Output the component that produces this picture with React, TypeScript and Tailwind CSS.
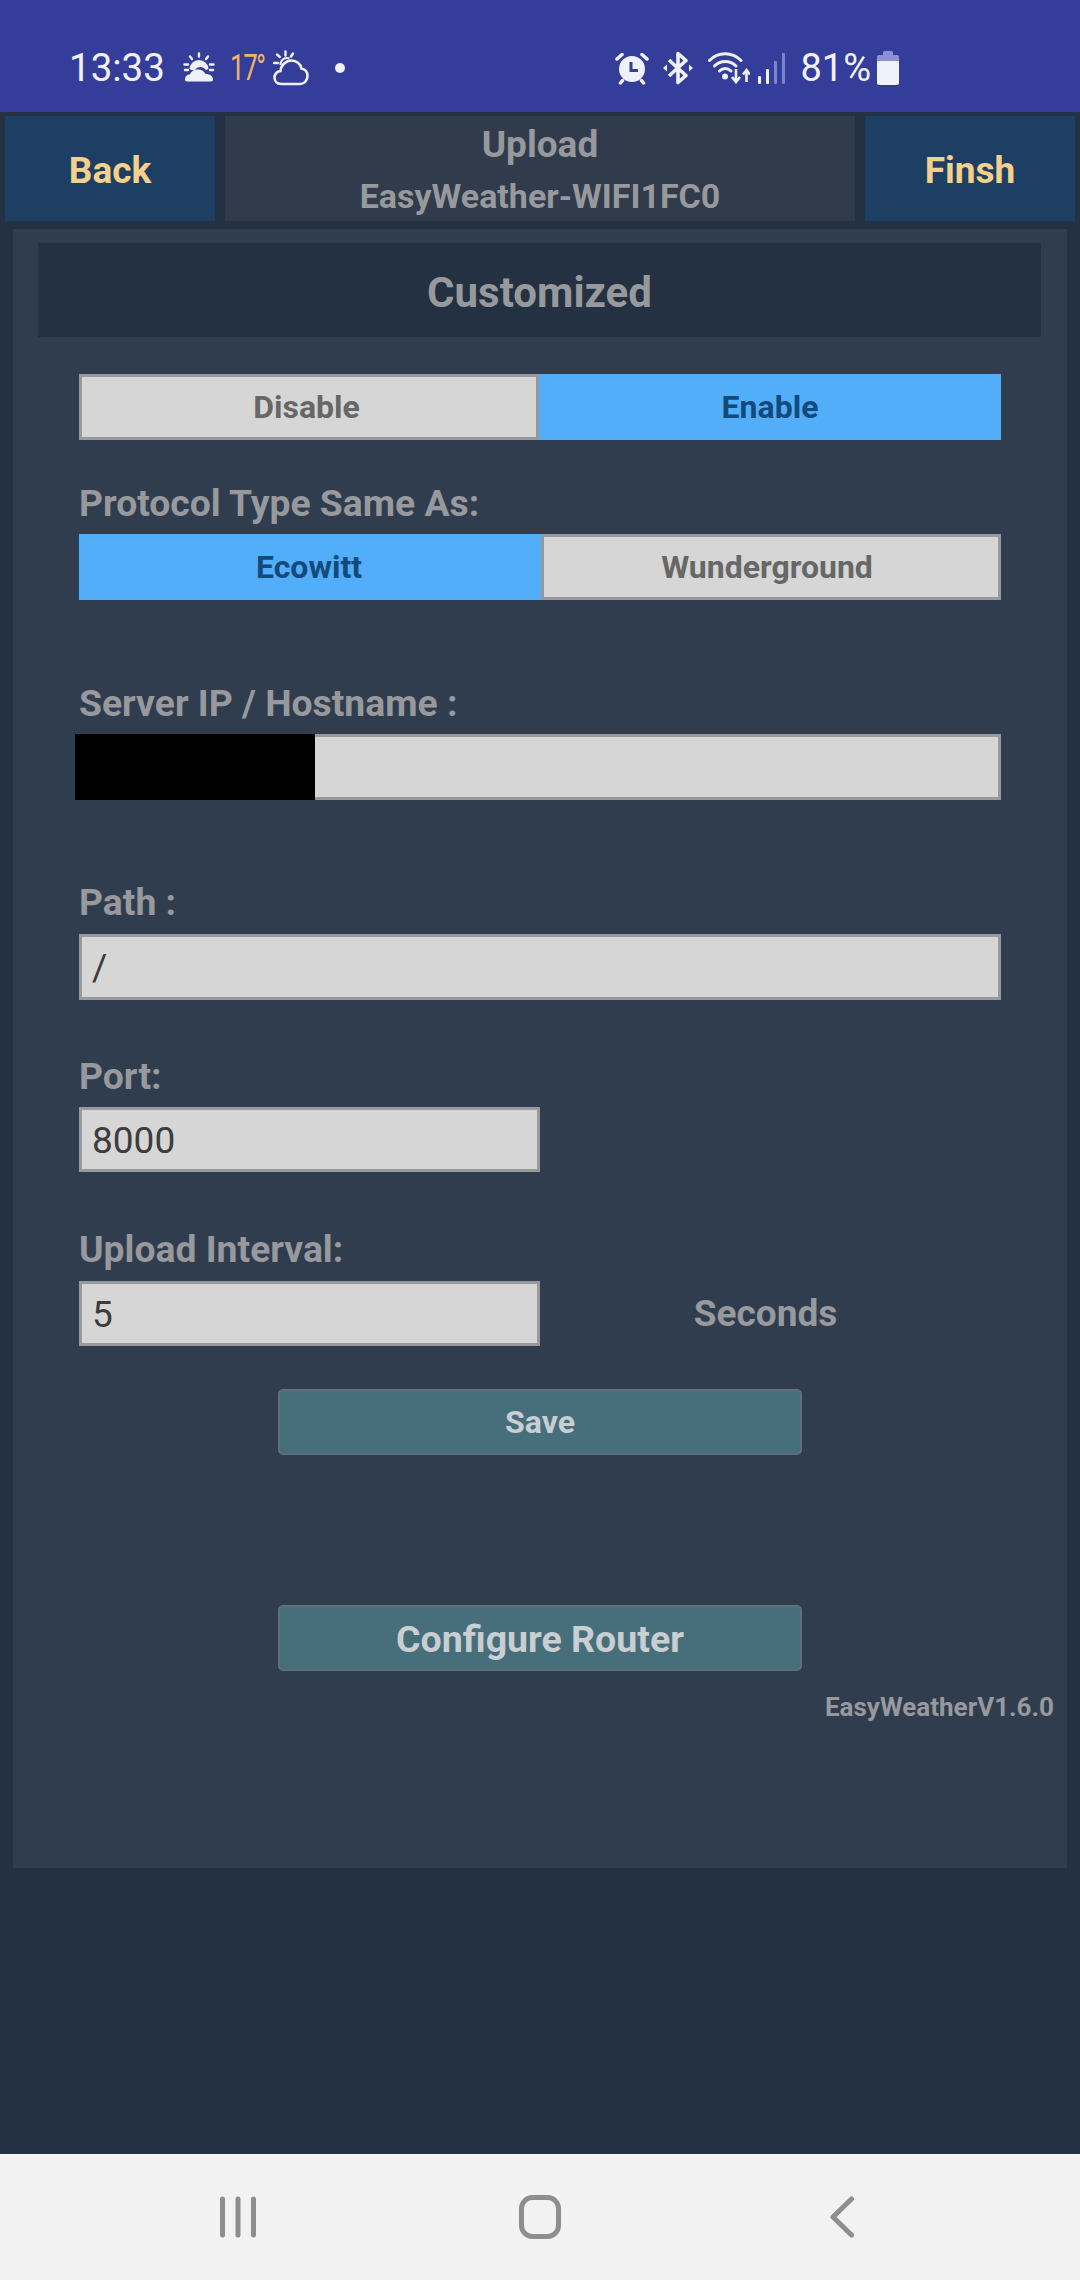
import React from 'react';

const ink = '#f0f1fa';

// status bar icons
function SunCloud() {
  return (
    <svg width="32" height="32" viewBox="0 0 32 32" className="ml-[18px]">
      <g stroke={ink} strokeWidth="2.4" strokeLinecap="round">
        <path d="M16 1.500v3M7 4.500l2 2.500M25 4.500l-2 2.500M1.500 12.500h3.500M27 12.500h3.500M2 18h3M27 18h3" />
      </g>
      <path d="M6.500 17a9.500 9 0 0 1 19 0l-2.500 1a7 6 0 0 0-5-3c-3 0-5 1-6.500 3.500-2-.5-4-.5-5 -1.500z" fill={ink} />
      <path d="M2 27.500c0-3 2.200-5 5-5 1-3 4-5 8-5 3.500 0 6.500 2 7.500 4.500 4-.2 7.500 2 7.500 5.500 0 1-.5 2-2 2H4c-1.300 0-2-1-2-2z" fill={ink} />
    </svg>
  );
}

function CloudOutline() {
  return (
    <svg width="36" height="36" viewBox="0 0 36 36" className="ml-[9px]" fill="none" stroke={ink}>
      <g strokeWidth="2.400" strokeLinecap="round">
        <path d="M12.500 1.500v4M4 4.500l2.800 2.500M20 3.500l-2 3M1 13h4" />
      </g>
      <path d="M7.500 15a6.500 6.500 0 0 1 9-6.500" strokeWidth="2" />
      <path d="M8 34c-4 0-6.500-3-6.500-6.500S4.500 21 7.500 21c.5-6 5.500-10.500 11-10.500 5 0 9 3.500 10 8 3.500.5 6 3.500 6 7.500 0 4-3 8-7 8z" strokeWidth="2.600" />
    </svg>
  );
}

function Alarm() {
  return (
    <svg width="34" height="34" viewBox="0 0 34 34">
      <circle cx="17" cy="18" r="13" fill={ink} />
      <path d="M16 11v8.500h7" fill="none" stroke="#343e9a" strokeWidth="3" />
      <g stroke={ink} strokeWidth="3.500" strokeLinecap="round">
        <path d="M2 8L7 3.500M32 8L27 3.500M5.500 32l2-2.500M28.500 32l-2-2.500" />
      </g>
    </svg>
  );
}

function Bluetooth() {
  return (
    <svg width="30" height="34" viewBox="0 0 30 34" className="ml-[14px]">
      <path d="M6 9l17 15.500-8 7V2.500l8 7L6 25" fill="none" stroke={ink} strokeWidth="3.600" strokeLinejoin="round" />
      <path d="M0 17l4-3.500v7zM30 17l-4-3.500v7z" fill={ink} />
    </svg>
  );
}

function WifiData() {
  return (
    <svg width="42" height="32" viewBox="0 0 42 32" className="ml-[15px]" fill="none" stroke={ink}>
      <g strokeWidth="3" strokeLinecap="round">
        <path d="M1.500 8.500C10 -.5 24 -.5 33 8.500" />
        <path d="M6.500 14c6-6 15.500-6 21.500 0" />
        <path d="M11.500 19c3.500-3.500 8-3.500 11.500 0" />
      </g>
      <circle cx="17" cy="24.500" r="3" fill={ink} stroke="none" />
      <path d="M28 17v12M24 25l4 5 4-5M38.500 30V19" strokeWidth="2.600" />
      <path d="M35 22.500l3.500-4.500 3.500 4.500" strokeWidth="2.600" />
    </svg>
  );
}

function Signal() {
  return (
    <svg width="28" height="32" viewBox="0 0 28 32" className="ml-[8px]">
      <rect x="0" y="24" width="3" height="8" rx="1" fill={ink} />
      <rect x="8" y="17" width="3" height="15" rx="1" fill={ink} />
      <rect x="16" y="9" width="3" height="23" rx="1" fill="#7b84cc" />
      <rect x="24" y="1" width="3" height="31" rx="1" fill="#7b84cc" />
    </svg>
  );
}

function Battery() {
  return (
    <svg width="22" height="34" viewBox="0 0 22 34" className="ml-[6px]">
      <rect x="6" y="0" width="10" height="6" rx="1.500" fill="#8b92d2" />
      <path d="M2 4h18a2 2 0 0 1 2 2v4H0V6a2 2 0 0 1 2-2z" fill="#8b92d2" />
      <path d="M0 10h22v22a2 2 0 0 1-2 2H2a2 2 0 0 1-2-2z" fill={ink} />
    </svg>
  );
}

function StatusBar() {
  return (
    <div className="h-[112px] flex items-center justify-between bg-[#343e9a] pt-[24px] pl-[69px] pr-[181px] text-[#f0f1fa] font-['Roboto',sans-serif]">
      <div className="flex items-center">
        <span className="text-[38.500px] leading-none">13:33</span>
        <SunCloud />
        <span className="ml-[15px] w-[34px] inline-block text-[36px] leading-none text-[#edb468] tracking-[-2px] whitespace-nowrap scale-x-[0.72] origin-left">17°</span>
        <CloudOutline />
        <span className="ml-[26px] w-[10px] h-[10px] rounded-full bg-[#f0f1fa]" />
      </div>
      <div className="flex items-center">
        <Alarm />
        <Bluetooth />
        <WifiData />
        <Signal />
        <span className="ml-[14px] text-[38px] leading-none">81%</span>
        <Battery />
      </div>
    </div>
  );
}

function Header() {
  return (
    <div className="flex items-stretch h-[105px] mt-[4px] pl-[5px] pr-[5px] gap-[10px] font-bold">
      <div className="w-[210px] bg-[#1c3f63] text-[#f5cf8c] text-[37px] pt-[5px] flex items-center justify-center">Back</div>
      <div className="flex-1 bg-[#303c4c] text-[#97999c] pt-[4px] flex flex-col items-center justify-center">
        <div className="text-[37px] leading-[52px]">Upload</div>
        <div className="text-[34px] leading-[51px]">EasyWeather-WIFI1FC0</div>
      </div>
      <div className="w-[210px] bg-[#1c3f63] text-[#f5cf8c] text-[37px] pt-[5px] flex items-center justify-center">Finsh</div>
    </div>
  );
}

function Segment({ label, active, className = '' }: { label: string; active?: boolean; className?: string }) {
  return (
    <div
      className={
        active
          ? `flex items-center justify-center bg-[#52aef9] text-[#134a7c] text-[32px] font-bold ${className}`
          : `flex items-center justify-center bg-[#d6d6d6] border-[3px] border-[#97999c] text-[#676767] text-[32px] font-bold ${className}`
      }
    >
      {label}
    </div>
  );
}

function Label({ text, className }: { text: string; className: string }) {
  return <div className={`text-[37.300px] leading-[40px] font-bold text-[#97999c] ${className}`}>{text}</div>;
}

function Field({ value, className = '' }: { value?: string; className?: string }) {
  return (
    <div className={`h-[65px] flex items-center pl-[10px] pt-[2px] bg-[#d6d6d6] border-[3px] border-[#97999c] text-[37px] text-[#3c3c3c] ${className}`}>
      {value}
    </div>
  );
}

function ActionButton({ label, className }: { label: string; className: string }) {
  return (
    <div className={`mx-auto w-[524px] h-[66px] flex items-center justify-center rounded-[5px] bg-[#466e7b] border-2 border-[#5e6f7d] font-bold text-[#c8ced1] ${className}`}>
      {label}
    </div>
  );
}

function NavBar() {
  return (
    <div className="h-[126px] bg-[#f2f2f2] flex items-center justify-between pl-[220px] pr-[226px]">
      <svg width="36" height="42" viewBox="0 0 36 42" fill="none" stroke="#8e8e8e" strokeWidth="5" strokeLinecap="round">
        <path d="M2.500 3v36M18 3v36M33.500 3v36" />
      </svg>
      <svg width="42" height="44" viewBox="0 0 42 44" fill="none" stroke="#8e8e8e" strokeWidth="5" className="mr-[6px]">
        <rect x="2.500" y="2.500" width="37" height="39" rx="11" />
      </svg>
      <svg width="24" height="42" viewBox="0 0 24 42" fill="none" stroke="#8e8e8e" strokeWidth="5" strokeLinecap="round" strokeLinejoin="round">
        <path d="M21.500 3L3 21l18.500 18" />
      </svg>
    </div>
  );
}

export default function App() {
  return (
    <div className="w-[1080px] h-[2280px] flex flex-col bg-[#233143] font-['Roboto',sans-serif] overflow-hidden">
      <StatusBar />
      <Header />

      <div className="flex-1">
        <div className="mt-[8px] mx-[13px] h-[1639px] bg-[#303d4f] pt-[14px] pl-[25px] pr-[26px]">
          <div className="h-[94px] pt-[4px] bg-[#233143] flex items-center justify-center text-[42px] font-bold text-[#97999c]">
            Customized
          </div>

          <div className="pl-[41px] pr-[40px] relative">
            <div className="mt-[37px] flex h-[66px]">
              <Segment label="Disable" className="w-[460px] pr-[5px]" />
              <Segment label="Enable" active className="flex-1" />
            </div>

            <Label text="Protocol Type Same As:" className="mt-[43px] mb-[11px]" />
            <div className="flex h-[66px]">
              <Segment label="Ecowitt" active className="w-[462px] pr-[2px]" />
              <Segment label="Wunderground" className="flex-1 pr-[8px]" />
            </div>

            <Label text="Server IP / Hostname :" className="mt-[83px] mb-[11px]" />
            <div className="relative">
              <Field className="h-[66px]" />
              <div className="absolute -left-[4px] top-0 w-[240px] h-[66px] bg-black" />
            </div>

            <Label text="Path :" className="mt-[82px] mb-[12px]" />
            <Field value="/" className="h-[66px]" />

            <Label text="Port:" className="mt-[56px] mb-[11px]" />
            <Field value="8000" className="w-[461px]" />

            <Label text="Upload Interval:" className="mt-[57px] mb-[12px]" />
            <div className="flex items-center">
              <Field value="5" className="w-[461px]" />
              <div className="flex-1 text-center text-[37px] font-bold text-[#97999c] pr-[10px]">Seconds</div>
            </div>

            <ActionButton label="Save" className="mt-[43px] text-[32px]" />
            <ActionButton label="Configure Router" className="mt-[150px] pt-[2px] text-[37.500px]" />
          </div>

          <div className="mt-[20px] -mr-[13px] text-right text-[26px] leading-[32px] font-bold text-[#97999c]">EasyWeatherV1.6.0</div>
        </div>
      </div>

      <NavBar />
    </div>
  );
}
